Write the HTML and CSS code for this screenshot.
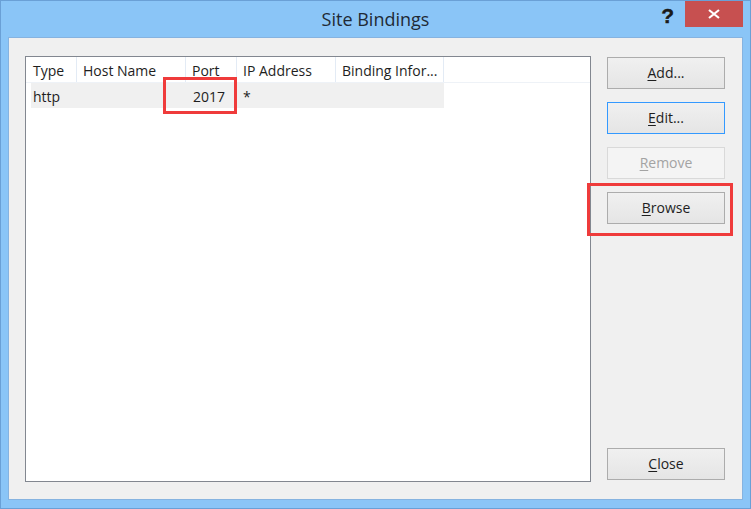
FILE: index.html
```html
<!DOCTYPE html>
<html>
<head>
<meta charset="utf-8">
<title>Site Bindings</title>
<link rel="stylesheet" href="styles.css">
</head>
<body>
<div class="window">
  <div class="titlebar">
    <div class="spacer"></div>
    <div class="title">Site Bindings</div>
    <div class="controls">
      <div class="help">?</div>
      <div class="close">
        <svg width="12" height="10" viewBox="0 0 12 10"><path d="M1 1 L11 9 M11 1 L1 9" stroke="#fff" stroke-width="2.2" fill="none"/></svg>
      </div>
    </div>
  </div>
  <div class="client">
    <div class="list">
      <div class="header">
        <div class="hcell c-type first">Type</div>
        <div class="hcell c-host">Host Name</div>
        <div class="hcell c-port">Port</div>
        <div class="hcell c-ip">IP Address</div>
        <div class="hcell c-info">Binding Infor...</div>
      </div>
      <div class="row">
        <div class="cell r-type">http</div>
        <div class="cell r-host"></div>
        <div class="cell r-port">2017</div>
        <div class="cell r-ip">*</div>
        <div class="cell r-info"></div>
      </div>
    </div>
    <div class="buttons">
      <button class="btn"><u>A</u>dd...</button>
      <button class="btn focused"><u>E</u>dit...</button>
      <button class="btn disabled"><u>R</u>emove</button>
      <button class="btn"><u>B</u>rowse</button>
      <button class="btn close-btn"><u>C</u>lose</button>
    </div>
  </div>
  <div class="mark mark-port"></div>
  <div class="mark mark-browse"></div>
</div>
</body>
</html>
```

FILE: styles.css
```css
* { box-sizing: border-box; }
html, body { margin: 0; padding: 0; }
body {
  width: 751px;
  height: 509px;
  font-family: "Segoe UI", "Open Sans", "Noto Sans", sans-serif;
  font-size: 14px;
  color: #1e1e1e;
  background: #8ac5f7;
}
.window {
  position: relative;
  width: 751px;
  height: 509px;
  border: 1px solid #6aa0d6;
  background: #8ac5f7;
  display: flex;
  flex-direction: column;
}
.titlebar {
  height: 36px;
  display: grid;
  grid-template-columns: 1fr auto 1fr;
  align-items: start;
}
.title {
  font-size: 18px;
  color: #1f2a36;
  line-height: 22px;
  padding-top: 7px;
}
.controls {
  display: flex;
  justify-content: flex-end;
  align-items: flex-start;
  padding-right: 7px;
}
.help {
  font-family: "Liberation Sans", "DejaVu Sans", sans-serif;
  font-weight: bold;
  font-size: 21px;
  line-height: 20px;
  color: #1a1a1a;
  padding-top: 5px;
  margin-right: 11px;
  -webkit-text-stroke: 0.4px #1a1a1a;
}
.close {
  width: 58px;
  height: 26px;
  background: #c75050;
  display: flex;
  align-items: center;
  justify-content: center;
}
.close svg { display: block; }
.client {
  flex: 1;
  margin: 0 7px 8px 7px;
  border: 1px solid #86b3e0;
  background: #f0f0f0;
  padding: 18px 17px 17px 16px;
  display: flex;
  gap: 16px;
}
.list {
  flex: 1;
  border: 1px solid #828790;
  background: #fff;
}
.header {
  display: flex;
  height: 26px;
  border-bottom: 1px solid #eef2f7;
}
.hcell {
  height: 25px;
  border-right: 1px solid #e3ebf5;
  padding-left: 6px;
  padding-top: 3px;
  line-height: 22px;
  white-space: nowrap;
  overflow: hidden;
}
.hcell.first { padding-left: 7px; }
.c-type { width: 51px; }
.c-host { width: 109px; }
.c-port { width: 51px; }
.c-ip { width: 99px; }
.c-info { width: 108px; }
.row {
  display: flex;
  margin-left: 5px;
  width: 413px;
  height: 25px;
  background: #f0f0f0;
}
.cell {
  line-height: 24px;
  padding-top: 2px;
  padding-left: 6px;
  white-space: nowrap;
}
.r-type { width: 46px; padding-left: 2px; }
.r-host { width: 109px; }
.r-port { width: 51px; text-align: right; padding-right: 12px; padding-left: 0; }
.r-ip { width: 99px; }
.r-info { width: 108px; }
.buttons {
  width: 118px;
  display: flex;
  flex-direction: column;
  gap: 13px;
  padding-top: 1px;
  padding-bottom: 2px;
}
.btn {
  height: 32px;
  width: 118px;
  border: 1px solid #acacac;
  background: linear-gradient(#f0f0f0, #e5e5e5);
  font-family: inherit;
  font-size: 14px;
  color: #1e1e1e;
  padding: 0 0 1px 0;
  margin: 0;
}
.btn u { text-underline-offset: 2px; text-decoration-thickness: 1px; }
.btn.focused { border-color: #3399ff; }
.btn.disabled {
  border-color: #d9d9d9;
  background: #f4f4f4;
  color: #a3a3a3;
}
.close-btn { margin-top: auto; }
.mark {
  position: absolute;
  border: 3px solid #ef3b3b;
}
.mark-port { left: 162px; top: 76px; width: 74px; height: 37px; }
.mark-browse { left: 586px; top: 182px; width: 146px; height: 53px; }
```
